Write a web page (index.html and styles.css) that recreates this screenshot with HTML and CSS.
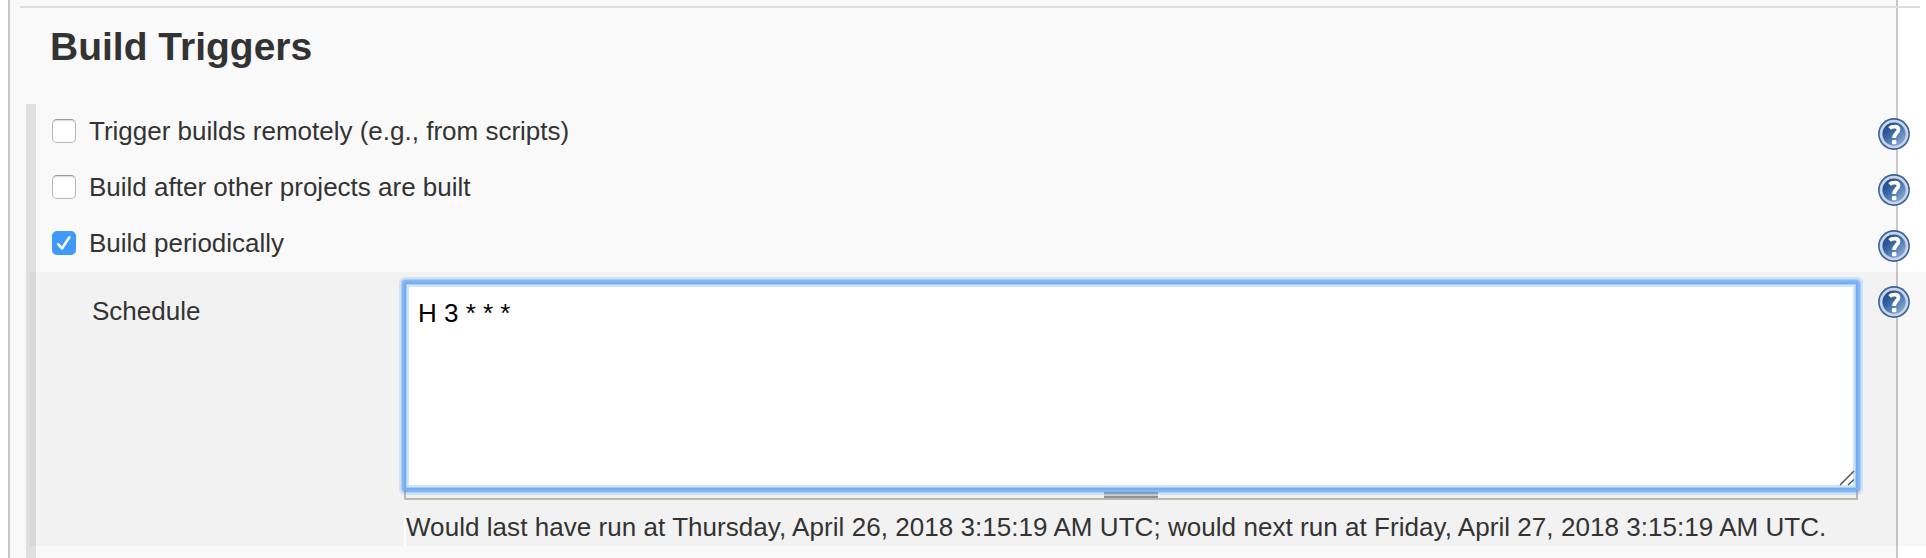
FILE: index.html
```html
<!DOCTYPE html>
<html lang="en">
<head>
<meta charset="utf-8">
<title>Build Triggers</title>
<link rel="stylesheet" href="styles.css">
</head>
<body>
<svg class="defs" width="0" height="0" aria-hidden="true">
  <defs>
    <linearGradient id="disc" x1="0.1" y1="0.1" x2="0.85" y2="0.9">
      <stop offset="0" stop-color="#1f4583"/>
      <stop offset="0.4" stop-color="#3865a3"/>
      <stop offset="1" stop-color="#86a9d2"/>
    </linearGradient>
    <symbol id="help" viewBox="0 0 32 32">
      <circle cx="16" cy="16" r="15.9" fill="#3b629b"/>
      <circle cx="16" cy="16" r="13" fill="#7897c1" stroke="#c9d6e8" stroke-width="2.6"/>
      <circle cx="16" cy="16" r="11.3" fill="url(#disc)"/>
      <path d="M11.6 10.3C13.5 8.4 20.5 7.3 20.5 11.6C20.5 14.8 16.1 15 16.1 20" fill="none" stroke="#fff" stroke-width="3.8"/>
      <rect x="14" y="22" width="4.4" height="4.2" rx="1" fill="#fff"/>
    </symbol>
  </defs>
</svg>
<main class="panel">
  <form class="config">
    <h1 class="title">Build Triggers</h1>
    <div class="group">
      <div class="row">
        <span class="check"></span>
        <span class="label">Trigger builds remotely (e.g., from scripts)</span>
        <svg class="help"><use href="#help"/></svg>
      </div>
      <div class="row">
        <span class="check"></span>
        <span class="label">Build after other projects are built</span>
        <svg class="help"><use href="#help"/></svg>
      </div>
      <div class="row">
        <span class="check checked"><svg width="24" height="24" viewBox="0 0 24 24"><path d="M6.2 13.2L10 17.5L17.4 6.3" fill="none" stroke="#fff" stroke-width="2.5" stroke-linecap="round" stroke-linejoin="round"/></svg></span>
        <span class="label">Build periodically</span>
        <svg class="help"><use href="#help"/></svg>
      </div>
      <div class="schedule">
        <span class="name">Schedule</span>
        <div class="field">
          <div class="editor">
            <textarea class="cron" spellcheck="false">H 3 * * *</textarea>
            <svg class="corner" width="16" height="16" viewBox="0 0 16 16"><path d="M1 15L15 1M9 15L15 9.5" stroke="#555" stroke-width="1.5" fill="none"/></svg>
          </div>
          <div class="handle"><span class="grip"></span></div>
          <div class="message">Would last have run at Thursday, April 26, 2018 3:15:19 AM UTC; would next run at Friday, April 27, 2018 3:15:19 AM UTC.</div>
        </div>
        <svg class="help"><use href="#help"/></svg>
      </div>
    </div>
  </form>
</main>
</body>
</html>
```
FILE: styles.css
```css
* { box-sizing: border-box; }

html { height: 558px; overflow: hidden; }

body {
  margin: 0;
  background: #fff;
  color: #333;
  font: 26px/30px "Liberation Sans", Arial, sans-serif;
  overflow: hidden;
}

.defs { display: block; }

.panel {
  width: 1890px;
  height: 558px;
  margin-left: 8px;
  padding: 6px 0 0 10px;
  background: #f9f9f9;
  border: solid #c8c8c8;
  border-width: 0 2px;
}

.config {
  width: 1906px;
  height: 552px;
  display: flex;
  flex-direction: column;
}

.title {
  width: 1900px;
  height: 98px;
  flex: none;
  margin: 0;
  padding: 17px 0 0 30px;
  border-top: 2px solid #ddd;
  font-size: 39px;
  line-height: 44px;
}

.group {
  flex: 1;
  margin-left: 6px;
  background: linear-gradient(#e0e0e0, #e0e0e0) 0 0 / 10px 100% no-repeat;
}

.row {
  display: flex;
  height: 56px;
  padding: 14px 16px 0 26px;
}

.check {
  width: 24px;
  height: 24px;
  margin: 1px 13px 0 0;
  border: 1px solid #b5b5b5;
  border-top-color: #999;
  border-radius: 5px;
  background: #fff;
  box-shadow: inset 0 1px 1px #ddd;
}

.checked {
  border: 0;
  background: #3f99fb;
  box-shadow: none;
}

.checked svg { display: block; }

.label { flex: 1; margin-top: -2px; }

.help { width: 32px; height: 32px; flex: none; }

.schedule {
  display: flex;
  width: 1896px;
  height: 274px;
  margin-left: 4px;
  background: rgba(0, 0, 0, 0.027);
}

.name { width: 374px; padding: 24px 0 0 62px; }

.field { width: 1454px; padding-top: 10px; }

.editor {
  display: grid;
  width: 1454px;
  height: 208px;
  position: relative;
  z-index: 1;
  border: 2px solid #75adf0;
  border-radius: 2px;
  background: #fff;
  box-shadow: 0 0 0 2px #82b9f5, 0 0 0 3px #a8cef5, 0 0 0 5px #cfe1f3, inset 0 0 0 1px #a8cef5, inset 0 0 0 3px #d0e5fb;
}

.cron {
  width: 100%;
  height: 100%;
  padding: 14px 12px;
  border: 0;
  outline: 0;
  resize: none;
  overflow: hidden;
  background: transparent;
  color: #000;
  font: inherit;
}

.corner { position: absolute; right: 1px; bottom: 2px; }

.handle {
  height: 10px;
  position: relative;
  z-index: 2;
  display: flex;
  justify-content: center;
  border: solid rgba(150, 150, 135, 0.62);
  border-width: 0 2px 2px;
}

.grip {
  width: 54px;
  height: 6px;
  margin-top: 2px;
  background: linear-gradient(rgba(70, 80, 90, .45) 0 2px, rgba(70, 80, 90, .2) 2px 4px, rgba(70, 80, 90, .6) 4px 6px);
}

.message {
  height: 32px;
  margin-top: 14px;
  border-left: 2px solid #fff;
  line-height: 26px;
  letter-spacing: 0.05px;
  white-space: nowrap;
}

.schedule .help { margin: 14px 0 0 20px; }
```
